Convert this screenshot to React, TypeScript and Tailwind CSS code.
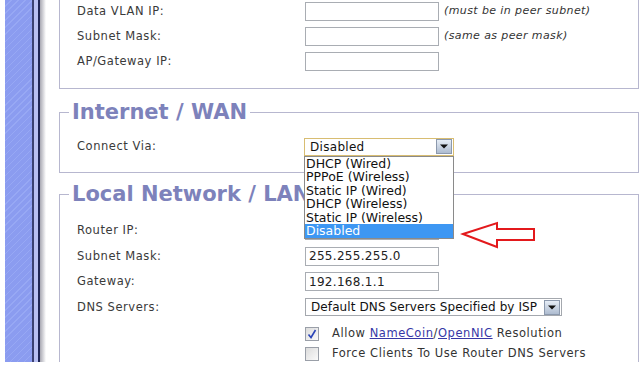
import { ReactNode } from "react"

const LABEL = "w-[245px] shrink-0 pl-[17px] text-[11.5px] tracking-[0.55px] text-[#3a3a3a]"
const BORDER = "border-[#b7b7cf]"

const Row = ({ label, children, h = "h-[25px]" }: { label?: string; children?: ReactNode; h?: string }) => (
  <div className={`flex items-center ${h}`}>
    <div className={LABEL}>{label}</div>
    {children}
  </div>
)

const TextBox = ({ value }: { value?: string }) => (
  <div className="flex h-[19px] w-[134px] items-center border border-[#a9adb3] bg-white px-[3px] text-[12px] tracking-[0.3px] text-[#222]">
    {value}
  </div>
)

const Hint = ({ children }: { children: ReactNode }) => (
  <span className="ml-[5px] text-[11px] italic tracking-[0.4px] text-[#333]">{children}</span>
)

const ArrowButton = () => (
  <div className="flex h-[15px] w-[16px] items-center justify-center border border-[#8c99ad] bg-gradient-to-b from-[#e6edf6] to-[#aebcd0]">
    <svg width="8" height="5" viewBox="0 0 8 5">
      <path d="M0 0.5 H8 L4 4.5 Z" fill="#111" />
    </svg>
  </div>
)

const Legend = ({ children }: { children: ReactNode }) => (
  <legend className="ml-[9px] px-[3px] text-[21px] leading-[24px] font-bold text-[#7d82bb]">{children}</legend>
)

const OPTIONS = ["DHCP (Wired)", "PPPoE (Wireless)", "Static IP (Wired)", "DHCP (Wireless)", "Static IP (Wireless)", "Disabled"]

const CheckBox = ({ checked }: { checked?: boolean }) => (
  <div className="flex h-[14px] w-[14px] items-center justify-center border border-[#9a9fa8] bg-gradient-to-br from-[#dcdcdc] to-[#fafafa]">
    {checked && (
      <svg width="10" height="10" viewBox="0 0 10 10">
        <path d="M1.5 5.5 L4 8.5 L8.5 1" fill="none" stroke="#2b45b8" strokeWidth="1.6" />
      </svg>
    )}
  </div>
)

export default function App() {
  return (
    <div className="relative h-[388px] w-[640px] overflow-hidden bg-white font-['DejaVu_Sans',sans-serif]">
      <div className="flex h-[362px]">
        {/* left frame strip */}
        <div className="ml-[5px] flex h-full shrink-0">
          <div className="w-[27px] bg-[#8c9df1] bg-[repeating-linear-gradient(135deg,#8b9cf0_0px,#8b9cf0_4px,#97a8f4_4px,#97a8f4_5px)]" />
          <div className="w-[2px] bg-[#3b4172]" />
          <div className="w-[4px] bg-[#b8bff2]" />
          <div className="w-[2px] bg-[#1f2555]" />
          <div className="w-[6px] bg-gradient-to-r from-[#a9a9b3] to-white" />
        </div>

        <div className="ml-[13px] flex h-full w-[580px] flex-col overflow-hidden">
          {/* peer section (scrolled) */}
          <div className={`h-[89px] shrink-0 border-x border-b ${BORDER}`}>
            <div className="-mt-[1px]">
              <Row label="Data VLAN IP:">
                <TextBox />
                <Hint>(must be in peer subnet)</Hint>
              </Row>
              <Row label="Subnet Mask:">
                <TextBox />
                <Hint>(same as peer mask)</Hint>
              </Row>
              <Row label="AP/Gateway IP:">
                <TextBox />
              </Row>
            </div>
          </div>

          <fieldset className={`mt-[11px] h-[73px] shrink-0 border ${BORDER}`}>
            <Legend>Internet / WAN</Legend>
            <div className="mt-[10px]">
              <Row label="Connect Via:">
                <div className="relative -ml-[1px] z-10">
                  <div className="flex h-[18px] w-[150px] items-center justify-between border border-[#d8bd72] bg-white pl-[5px] pr-[1px]">
                    <span className="text-[12px] tracking-[0.3px] text-[#111]">Disabled</span>
                    <ArrowButton />
                  </div>
                  <ul className="absolute left-0 top-full w-[150px] border border-[#8a8a8a] bg-white">
                    {OPTIONS.map((o, i) => (
                      <li
                        key={o}
                        className={`h-[13.5px] pl-[1px] text-[12.5px] leading-[13.5px] ${
                          i === OPTIONS.length - 1 ? "bg-[#3d97f3] text-white" : "text-[#111]"
                        }`}
                      >
                        {o}
                      </li>
                    ))}
                  </ul>
                </div>
              </Row>
            </div>
          </fieldset>

          <fieldset className={`mt-[9px] flex-1 border border-b-0 ${BORDER}`}>
            <Legend>Local Network / LAN</Legend>
            <div className="mt-[12px]">
              <Row label="Router IP:" h="h-[25.5px]">
                <TextBox />
              </Row>
              <Row label="Subnet Mask:" h="h-[25.5px]">
                <TextBox value="255.255.255.0" />
              </Row>
              <Row label="Gateway:" h="h-[25.5px]">
                <TextBox value="192.168.1.1" />
              </Row>
              <Row label="DNS Servers:" h="h-[25.5px]">
                <div className="flex h-[18px] w-[257px] items-center justify-between border border-[#a4a8ae] bg-white pl-[5px] pr-[1px]">
                  <span className="text-[12px] tracking-[0.1px] text-[#111]">Default DNS Servers Specified by ISP</span>
                  <ArrowButton />
                </div>
              </Row>
              <div className="mt-[4px]">
                <Row h="h-[20px]">
                  <CheckBox checked />
                  <span className="ml-[13px] text-[11.5px] tracking-[0.55px] text-[#333]">
                    Allow <span className="text-[#3737a6] underline">NameCoin</span>/
                    <span className="text-[#3737a6] underline">OpenNIC</span> Resolution
                  </span>
                </Row>
                <Row h="h-[20px]">
                  <CheckBox />
                  <span className="ml-[13px] text-[11.5px] tracking-[0.55px] text-[#333]">
                    Force Clients To Use Router DNS Servers
                  </span>
                </Row>
              </div>
            </div>
          </fieldset>
        </div>
      </div>

      {/* red annotation arrow */}
      <svg className="absolute left-[460px] top-[219px]" width="80" height="31" viewBox="460 219 80 31">
        <path
          d="M463 234 L497 223 L497 229 L534 229 L534 240 L497 240 L497 247 Z"
          fill="white"
          stroke="#e3191c"
          strokeWidth="2"
          strokeLinejoin="miter"
        />
      </svg>
    </div>
  )
}
